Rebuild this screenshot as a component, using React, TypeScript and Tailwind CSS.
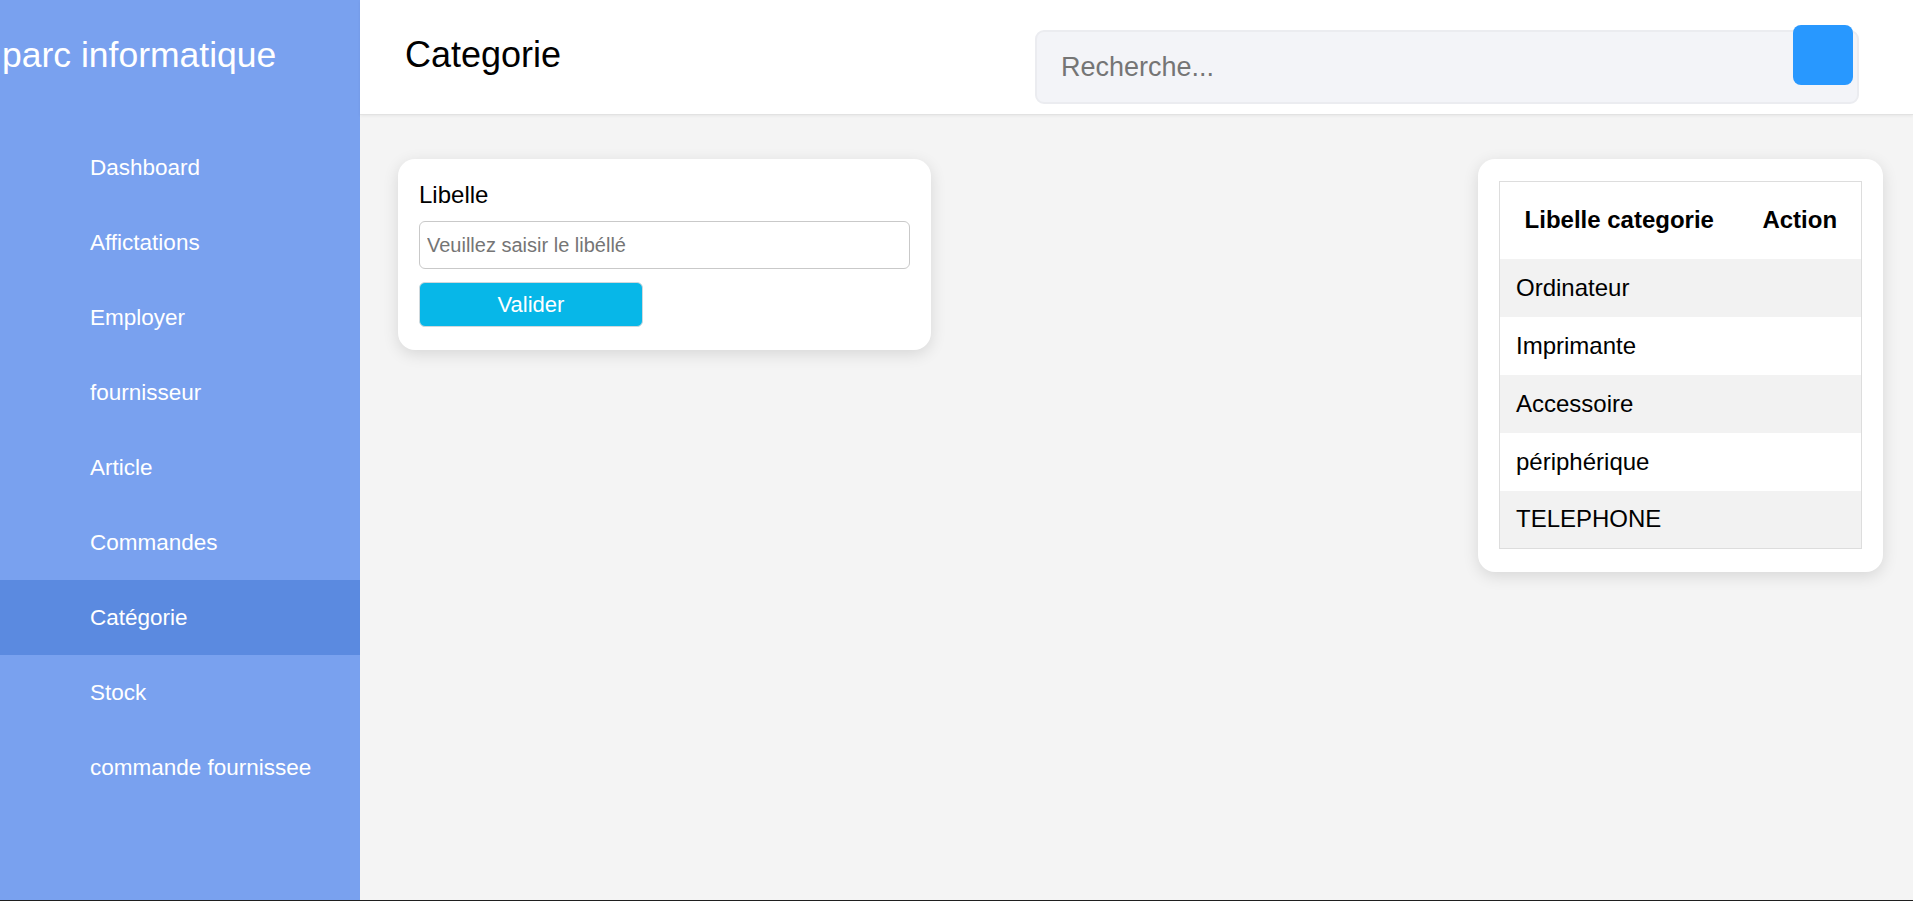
const navItems = [
  "Dashboard",
  "Affictations",
  "Employer",
  "fournisseur",
  "Article",
  "Commandes",
  "Catégorie",
  "Stock",
  "commande fournissee",
];

const categories = ["Ordinateur", "Imprimante", "Accessoire", "périphérique", "TELEPHONE"];

function Sidebar() {
  return (
    <aside className="w-[360px] shrink-0 bg-[#79a1ef] text-white">
      {/* Brand */}
      <div className="h-[130px] pt-[27px] pl-[2px]">
        <h1 className="text-[35.5px] leading-[56px]">parc informatique</h1>
      </div>

      {/* Menu */}
      <nav className="flex flex-col">
        {navItems.map((item) => (
          <a
            key={item}
            href="#"
            className={
              item === "Catégorie"
                ? "h-[75px] flex items-center pl-[90px] text-[22.5px] bg-[#5b8ae0]"
                : "h-[75px] flex items-center pl-[90px] text-[22.5px]"
            }
          >
            {item}
          </a>
        ))}
      </nav>
    </aside>
  );
}

function Header() {
  return (
    <header className="h-[115px] shrink-0 bg-white border-b border-[#e2e2e2] shadow-[0_1px_3px_rgba(0,0,0,0.06)] flex items-start justify-between pl-[45px] pr-[54px]">
      <h2 className="text-[36px] text-black pt-[27px] leading-[56px]">Categorie</h2>

      <div className="relative mt-[30px] w-[824px]">
        <input
          type="text"
          placeholder="Recherche..."
          className="w-full h-[74px] rounded-[9px] border-2 border-[#ebecf0] bg-[#f3f4f8] pl-[24px] text-[27px] placeholder:text-[#757575] outline-none"
        />
        <button className="absolute -top-[5px] right-[6px] w-[60px] h-[60px] rounded-[8px] bg-[#2898ff]" />
      </div>
    </header>
  );
}

function CategoryForm() {
  return (
    <div className="w-[533px] bg-white rounded-[17px] shadow-[0_4px_16px_rgba(0,0,0,0.12)] px-[21px] pt-[21px] pb-[23px]">
      <label className="block text-[24px] text-black leading-[29px]">Libelle</label>
      <input
        type="text"
        placeholder="Veuillez saisir le libéllé"
        className="mt-[12px] block w-full h-[48px] rounded-[6px] border border-[#c9c9c9] px-[7px] text-[20px] placeholder:text-[#757575] outline-none"
      />
      <button className="mt-[13px] block w-[224px] h-[45px] rounded-[6px] border border-[#cfd8dc] bg-[#07b7e8] text-white text-[22px]">
        Valider
      </button>
    </div>
  );
}

function CategoryTable() {
  return (
    <div className="w-[405px] bg-white rounded-[17px] shadow-[0_4px_16px_rgba(0,0,0,0.12)] px-[21px] pt-[22px] pb-[23px]">
      <table className="w-full border-collapse border border-[#dddddd] text-[24px] text-black">
        <thead>
          <tr className="h-[77px] bg-white">
            <th className="w-[239px] text-center font-bold">Libelle categorie</th>
            <th className="text-center font-bold">Action</th>
          </tr>
        </thead>
        <tbody>
          {categories.map((cat, i) => (
            <tr key={cat} className={i % 2 === 0 ? "h-[58px] bg-[#f2f2f2]" : "h-[58px] bg-white"}>
              <td className="pl-[16px]">{cat}</td>
              <td></td>
            </tr>
          ))}
        </tbody>
      </table>
    </div>
  );
}

export default function App() {
  return (
    <div className="h-[901px] flex border-b border-[#1f1f1f] font-['Liberation_Sans',Arial,sans-serif] overflow-hidden">
      <Sidebar />

      <div className="flex-1 flex flex-col bg-[#f4f4f4]">
        <Header />

        <main className="flex-1 flex items-start justify-between pl-[38px] pr-[30px] pt-[44px]">
          <CategoryForm />
          <CategoryTable />
        </main>
      </div>
    </div>
  );
}
